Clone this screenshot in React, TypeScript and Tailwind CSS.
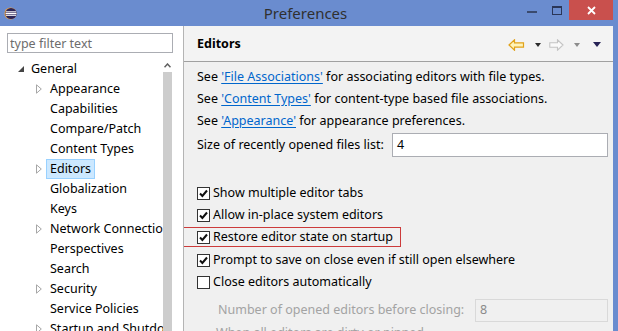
import { ReactNode } from "react";

type TreeItem = { label: string; arrow?: boolean; selected?: boolean };

const children: TreeItem[] = [
  { label: "Appearance", arrow: true },
  { label: "Capabilities" },
  { label: "Compare/Patch" },
  { label: "Content Types" },
  { label: "Editors", arrow: true, selected: true },
  { label: "Globalization" },
  { label: "Keys" },
  { label: "Network Connections", arrow: true },
  { label: "Perspectives" },
  { label: "Search" },
  { label: "Security", arrow: true },
  { label: "Service Policies" },
  { label: "Startup and Shutdown", arrow: true },
];

function EclipseIcon() {
  return (
    <svg width="13" height="13" viewBox="0 0 13 13">
      <circle cx="6.5" cy="6.5" r="6" fill="#f3a43c" />
      <circle cx="7" cy="6.5" r="5.6" fill="#2c2456" />
      <rect x="2" y="4.3" width="10" height="1.1" fill="#fff" />
      <rect x="1.6" y="6" width="10.8" height="1.1" fill="#fff" />
      <rect x="2" y="7.7" width="10" height="1.1" fill="#fff" />
    </svg>
  );
}

function Checkbox({ checked }: { checked: boolean }) {
  return (
    <span className="w-[13px] h-[13px] border border-[#333333] bg-white flex items-center justify-center shrink-0">
      {checked && (
        <svg width="11" height="11" viewBox="0 0 11 11">
          <path d="M2 5.5 L4.4 8 L9 2.5" fill="none" stroke="#111" strokeWidth="2" />
        </svg>
      )}
    </span>
  );
}

function CheckRow({ checked, children, h = "h-[22px]" }: { checked: boolean; children: ReactNode; h?: string }) {
  return (
    <div className={`flex items-center gap-[3px] shrink-0 ${h}`}>
      <Checkbox checked={checked} />
      <span>{children}</span>
    </div>
  );
}

function Link({ children }: { children: ReactNode }) {
  return <span className="text-[#0066cc] underline underline-offset-2">{children}</span>;
}

export default function App() {
  return (
    <div className="w-[618px] h-[331px] overflow-hidden bg-[#6a8ccf] flex flex-col font-['Noto_Sans',sans-serif] text-[12.5px] text-black">
      {/* title bar */}
      <div className="h-[26px] flex items-start shrink-0">
        <div className="w-[22px] h-[26px] flex items-center pl-[4px] pt-[1px]">
          <EclipseIcon />
        </div>
        <div className="flex-1 h-[26px] flex items-center justify-center pl-[70px] text-[15px] text-[#303030]">
          Preferences
        </div>
        <div className="w-[26px] h-[20px] flex items-center justify-center">
          <span className="w-[10px] h-[2px] bg-[#3a4a6e] mt-[3px]" />
        </div>
        <div className="w-[24px] h-[20px] flex items-center justify-center">
          <span className="w-[10px] h-[9px] border border-t-2 border-[#2a3658]" />
        </div>
        <div className="w-[44px] h-[20px] bg-[#c9504d] flex items-center justify-center">
          <svg width="9" height="9" viewBox="0 0 9 9">
            <path d="M1 1 L8 8 M8 1 L1 8" stroke="#fff" strokeWidth="1.8" />
          </svg>
        </div>
        <div className="w-[5px]" />
      </div>

      {/* body */}
      <div className="flex-1 min-h-0 flex pr-[5px]">
        {/* left tree */}
        <div className="w-[184px] shrink-0 bg-white border-r border-[#b4b4b4] flex flex-col pl-[7px] pr-[10px] pt-[7px]">
          <input
            className="h-[20px] shrink-0 w-full border border-[#abadb3] px-[2px] text-[12.5px] outline-none placeholder:text-[#6d6d6d]"
            placeholder="type filter text"
          />
          <div className="flex-1 min-h-0 flex mt-[6px]">
            <div className="flex-1 min-w-0 overflow-hidden">
              <div className="h-[20px] flex items-center whitespace-nowrap">
                <span className="w-[24px] shrink-0 pl-[11px] flex items-center">
                  <svg width="6" height="6" viewBox="0 0 6 6">
                    <path d="M6 0 L6 6 L0 6 Z" fill="#454545" />
                  </svg>
                </span>
                <span>General</span>
              </div>
              {children.map((c) => (
                <div key={c.label} className="h-[20px] flex items-center whitespace-nowrap">
                  <span className="w-[39px] shrink-0 pl-[29px] flex items-center">
                    {c.arrow && (
                      <svg width="6" height="10" viewBox="0 0 6 10">
                        <path d="M0.5 0.8 L5.3 5 L0.5 9.2 Z" fill="#fff" stroke="#a6a6a6" />
                      </svg>
                    )}
                  </span>
                  <span
                    className={`h-[20px] shrink-0 flex items-center px-[3px] border ${
                      c.selected ? "bg-[#cce8ff] border-[#99d1ff]" : "border-transparent"
                    }`}
                  >
                    {c.label}
                  </span>
                </div>
              ))}
            </div>
            <div className="w-[9px] shrink-0 mr-[1px] flex flex-col">
              <div className="h-[13px] flex items-center justify-center">
                <svg width="7" height="5" viewBox="0 0 7 5">
                  <path d="M0.5 4.2 L3.5 1 L6.5 4.2" fill="none" stroke="#606060" strokeWidth="1.5" />
                </svg>
              </div>
              <div className="flex-1 bg-[#cdcdcd]" />
            </div>
          </div>
        </div>

        {/* right page */}
        <div className="flex-1 min-w-0 bg-[#f0f0f0] flex flex-col">
          <div className="h-[36px] shrink-0 border-b border-[#a0a0a0] flex items-center pl-[13px] pr-[12px] pt-[2px] bg-[#f3f3f3]">
            <span className="font-bold text-[12.5px]">Editors</span>
            <div className="ml-auto flex items-center">
              <svg width="17" height="12" viewBox="0 0 17 12">
                <path d="M1 6 L6.5 0.8 L6.5 3.8 L15.5 3.8 L15.5 8.2 L6.5 8.2 L6.5 11.2 Z" fill="#fff3b8" stroke="#e1a21a" strokeWidth="1.2" />
              </svg>
              <svg width="6" height="4" viewBox="0 0 6 4" className="ml-[10px]">
                <path d="M0 0 L6 0 L3 4 Z" fill="#2b2b2b" />
              </svg>
              <svg width="15" height="12" viewBox="0 0 15 12" className="ml-[8px]">
                <path d="M14 6 L8.5 0.8 L8.5 3.8 L0.8 3.8 L0.8 8.2 L8.5 8.2 L8.5 11.2 Z" fill="#fafafa" stroke="#c4c4c4" strokeWidth="1.1" />
              </svg>
              <svg width="6" height="4" viewBox="0 0 6 4" className="ml-[10px]">
                <path d="M0 0 L6 0 L3 4 Z" fill="#8c8c8c" />
              </svg>
              <svg width="8" height="5" viewBox="0 0 8 5" className="ml-[13px]">
                <path d="M0 0 L8 0 L4 5 Z" fill="#262255" />
              </svg>
            </div>
          </div>

          <div className="flex-1 min-h-0 overflow-hidden pl-[13px] pr-[5px] pt-[4px] flex flex-col whitespace-nowrap">
            <div className="h-[22px] shrink-0 flex items-center">
              <span>
                See <Link>'File Associations'</Link> for associating editors with file types.
              </span>
            </div>
            <div className="h-[22px] shrink-0 flex items-center">
              <span>
                See <Link>'Content Types'</Link> for content-type based file associations.
              </span>
            </div>
            <div className="h-[22px] shrink-0 flex items-center">
              <span>
                See <Link>'Appearance'</Link> for appearance preferences.
              </span>
            </div>
            <div className="h-[24px] shrink-0 mt-[1px] flex items-center">
              <span>Size of recently opened files list:</span>
              <div className="ml-auto w-[216px] h-[24px] bg-white border border-[#abadb3] flex items-center px-[4px]">
                4
              </div>
            </div>

            <div className="mt-[25px] shrink-0 flex flex-col">
              <CheckRow checked>Show multiple editor tabs</CheckRow>
              <CheckRow checked>Allow in-place system editors</CheckRow>
              <div className="relative shrink-0">
                <div className="absolute left-[-14px] top-[1px] w-[218px] h-[20px] border border-[#cc3b3b]" />
                <CheckRow checked h="h-[23px]">
                  Restore editor state on startup
                </CheckRow>
              </div>
              <CheckRow checked>Prompt to save on close even if still open elsewhere</CheckRow>
              <CheckRow checked={false}>Close editors automatically</CheckRow>
            </div>

            <div className="h-[23px] shrink-0 mt-[6px] flex items-center pl-[21px] text-[#a3a3a3]">
              <span>Number of opened editors before closing:</span>
              <div className="ml-auto w-[133px] h-[23px] bg-[#f0f0f0] border border-[#d9d9d9] flex items-center px-[4px] text-[#8a8a8a]">
                8
              </div>
            </div>
            <div className="h-[22px] shrink-0 flex items-center pl-[19px] text-[#a3a3a3]">
              When all editors are dirty or pinned
            </div>
          </div>
        </div>
      </div>
    </div>
  );
}
